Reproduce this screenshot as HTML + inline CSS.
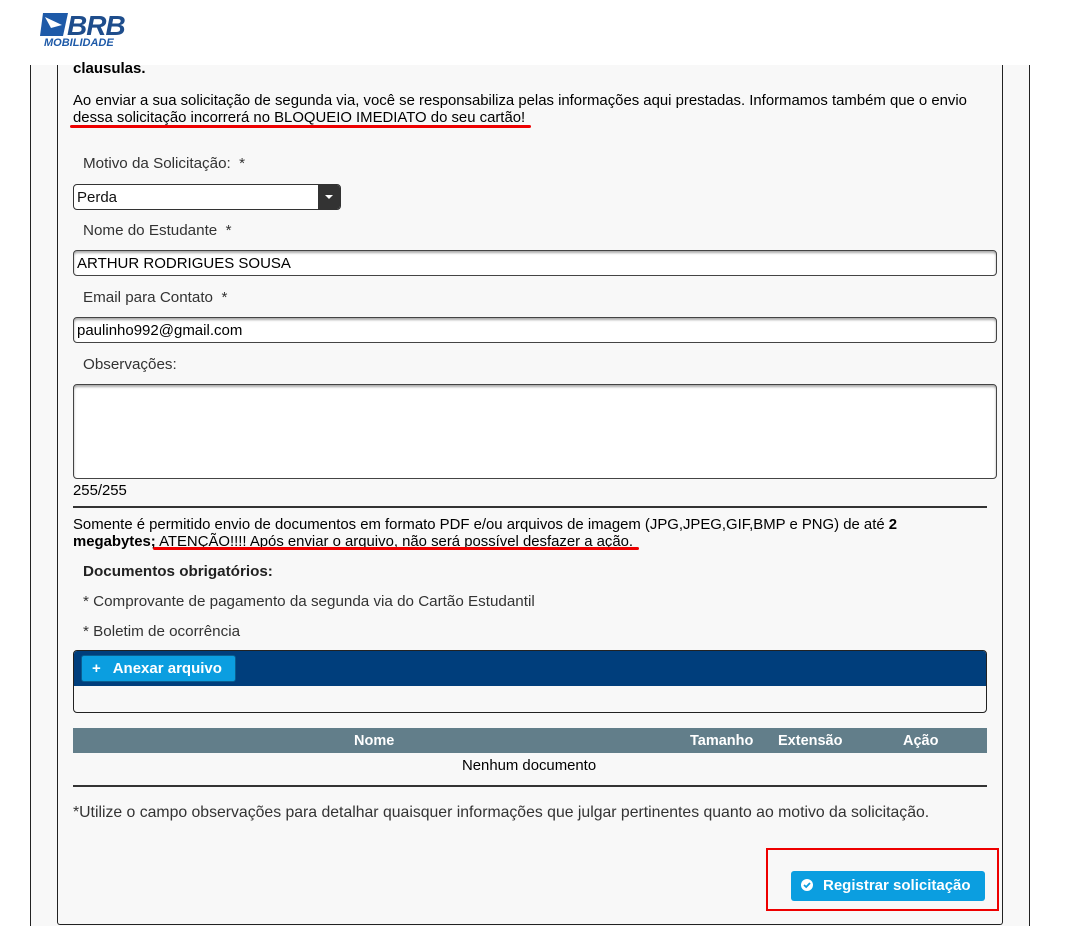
<!DOCTYPE html>
<html><head><meta charset="utf-8"><style>
*{margin:0;padding:0;box-sizing:border-box}
body{width:1066px;height:926px;background:#fff;position:relative;overflow:hidden;font-family:"Liberation Sans",Arial,sans-serif;color:#111}
.a{position:absolute}
.lbl{position:absolute;left:83px;font-size:15.2px;color:#333;font-family:"Liberation Sans",sans-serif;white-space:nowrap}
.t{position:absolute;left:73px;font-size:14.9px;color:#000;white-space:nowrap}
.inp{position:absolute;left:73px;width:924px;height:26px;background:#fff;border:1px solid #444;border-radius:4px;box-shadow:inset 0 2px 2px #aaa;font-size:15px;padding:4px 3px;color:#000}
.th{position:absolute;color:#fff;font-weight:bold;font-size:14.5px}
</style></head><body>
<div class="a" style="left:30px;top:65px;width:1000px;height:861px;background:#f8f8f8;border-left:1px solid #222;border-right:1px solid #222"></div>
<div class="a" style="left:57px;top:65px;width:946px;height:860px;border:1px solid #222;border-top:none;border-radius:0 0 3px 3px"></div>
<svg class="a" style="left:40px;top:10px" width="90" height="38" viewBox="0 0 90 38">
<path d="M3 3 H28 L23 26 H0 Z" fill="#1e5aa8"/>
<path d="M5 7 L22 15 L11 18 Z" fill="#fff"/>
<text x="27" y="25" font-family="Liberation Sans" font-weight="bold" font-style="italic" font-size="28" fill="#1e4d8c" letter-spacing="-1">BRB</text>
<text x="4" y="36" font-family="Liberation Sans" font-weight="bold" font-style="italic" font-size="11" fill="#1e5aa8">MOBILIDADE</text>
</svg>
<div class="t" style="top:60px;font-weight:bold;font-size:15px">clausulas.</div>
<div class="t" style="top:93px;line-height:17px">Ao enviar a sua solicitação de segunda via, você se responsabiliza pelas informações aqui prestadas. Informamos também que o envio<br>dessa solicitação incorrerá no BLOQUEIO IMEDIATO do seu cartão!</div>
<div class="a" style="left:70px;top:125px;width:461px;height:3px;background:#e00;border-radius:2px"></div>
<div class="lbl" style="top:155px">Motivo da Solicitação:&nbsp; *</div>
<div class="a" style="left:73px;top:184px;width:268px;height:26px;background:#fff;border:1px solid #333;border-radius:4px;font-size:15px;padding:4px 3px;overflow:hidden">Perda<div class="a" style="right:0;top:0;width:22px;height:24px;background:#333"><div class="a" style="left:7px;top:10px;border:4px solid transparent;border-top:4px solid #fff;border-bottom:0"></div></div></div>
<div class="lbl" style="top:222px">Nome do Estudante&nbsp; *</div>
<div class="inp" style="top:250px">ARTHUR RODRIGUES SOUSA</div>
<div class="lbl" style="top:289px">Email para Contato&nbsp; *</div>
<div class="inp" style="top:317px">paulinho992@gmail.com</div>
<div class="lbl" style="top:356px">Observações:</div>
<div class="inp" style="top:384px;height:95px"></div>
<div class="t" style="top:483px">255/255</div>
<div class="a" style="left:73px;top:506px;width:914px;height:2px;background:#333"></div>
<div class="t" style="top:517px;line-height:17px">Somente é permitido envio de documentos em formato PDF e/ou arquivos de imagem (JPG,JPEG,GIF,BMP e PNG) de até <b>2</b><br><b>megabytes;</b><span style="text-decoration:underline"> ATENÇÃO!!!! Após enviar o arquivo, não será possível desfazer a ação.</span></div>
<div class="a" style="left:153px;top:547px;width:486px;height:3px;background:#e00;border-radius:2px"></div>
<div class="lbl" style="top:563px;font-weight:bold;color:#222">Documentos obrigatórios:</div>
<div class="lbl" style="top:593px">* Comprovante de pagamento da segunda via do Cartão Estudantil</div>
<div class="lbl" style="top:623px">* Boletim de ocorrência</div>
<div class="a" style="left:73px;top:650px;width:914px;height:63px;border:1px solid #222;border-radius:4px;background:#f8f8f8;overflow:hidden"><div style="height:35px;background:#003e7c"></div></div>
<div class="a" style="left:81px;top:655px;width:155px;height:27px;background:#0b9ee0;border:1px solid #0a5e90;border-radius:3px;color:#fff;font-weight:bold;font-size:15px;padding:4px 0 0 10px">+&nbsp;&nbsp; Anexar arquivo</div>
<div class="a" style="left:73px;top:728px;width:914px;height:25px;background:#627e8a"></div>
<div class="th" style="left:354px;top:733px">Nome</div>
<div class="th" style="left:690px;top:733px">Tamanho</div>
<div class="th" style="left:778px;top:733px">Extensão</div>
<div class="th" style="left:903px;top:733px">Ação</div>
<div class="t" style="left:462px;top:758px">Nenhum documento</div>
<div class="a" style="left:73px;top:785px;width:914px;height:2px;background:#333"></div>
<div class="lbl" style="left:73px;top:804px;font-size:15.8px">*Utilize o campo observações para detalhar quaisquer informações que julgar pertinentes quanto ao motivo da solicitação.</div>
<div class="a" style="left:766px;top:848px;width:233px;height:63px;border:2px solid #e00"></div>
<div class="a" style="left:791px;top:871px;width:194px;height:30px;background:#0b9ee0;border-radius:3px;color:#fff;font-weight:bold;font-size:15px;padding:6px 0 0 10px"><svg width="12" height="12" viewBox="0 0 12 12" style="vertical-align:-1px;margin-right:10px"><circle cx="6" cy="6" r="6" fill="#fff"/><path d="M3 6 L5.2 8 L9 4" stroke="#0b9ee0" stroke-width="1.8" fill="none"/></svg>Registrar solicitação</div>
</body></html>
